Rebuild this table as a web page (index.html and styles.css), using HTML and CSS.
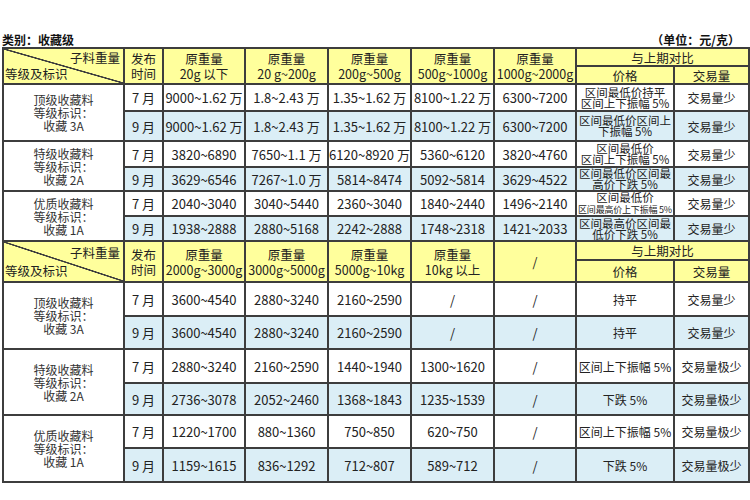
FILE: index.html
```html
<!DOCTYPE html>
<html lang="zh-CN">
<head>
<meta charset="utf-8">
<title>收藏级</title>
<link rel="stylesheet" href="styles.css">
</head>
<body>
<div class="page">
  <div class="caption">
    <span class="cat">类别：收藏级</span>
    <span class="unit">（单位：元/克）</span>
  </div>
  <table class="grid">
    <colgroup>
      <col class="c1"><col class="c2"><col class="c3"><col class="c4"><col class="c5"><col class="c6"><col class="c7"><col class="c8"><col class="c9">
    </colgroup>
    <tbody>
      <tr class="h18">
        <td class="hd diag" rowspan="2"><div class="tr">子料重量</div><div class="bl">等级及标识</div></td>
        <td class="hd" rowspan="2">发布<br>时间</td>
        <td class="hd" rowspan="2">原重量<br>20g 以下</td>
        <td class="hd" rowspan="2">原重量<br>20 g~200g</td>
        <td class="hd" rowspan="2">原重量<br>200g~500g</td>
        <td class="hd" rowspan="2">原重量<br>500g~1000g</td>
        <td class="hd" rowspan="2">原重量<br>1000g~2000g</td>
        <td class="hd" colspan="2">与上期对比</td>
      </tr>
      <tr class="h18">
        <td class="hd">价格</td>
        <td class="hd">交易量</td>
      </tr>

      <tr class="h27">
        <td class="lbl" rowspan="2">顶级收藏料<br>等级标识：<br>收藏 3A</td>
        <td>7 月</td><td>9000~1.62 万</td><td>1.8~2.43 万</td><td>1.35~1.62 万</td><td>8100~1.22 万</td><td>6300~7200</td>
        <td class="two">区间最低价持平<br>区间上下振幅 5%</td><td class="sm">交易量少</td>
      </tr>
      <tr class="h30 blue">
        <td>9 月</td><td>9000~1.62 万</td><td>1.8~2.43 万</td><td>1.35~1.62 万</td><td>8100~1.22 万</td><td>6300~7200</td>
        <td class="two">区间最低价区间上<br>下振幅 5%</td><td class="sm">交易量少</td>
      </tr>

      <tr class="h26">
        <td class="lbl" rowspan="2">特级收藏料<br>等级标识：<br>收藏 2A</td>
        <td>7 月</td><td>3820~6890</td><td>7650~1.1 万</td><td>6120~8920 万</td><td>5360~6120</td><td>3820~4760</td>
        <td class="two">区间最低价<br>区间上下振幅 5%</td><td class="sm">交易量少</td>
      </tr>
      <tr class="h24 blue">
        <td>9 月</td><td>3629~6546</td><td>7267~1.0 万</td><td>5814~8474</td><td>5092~5814</td><td>3629~4522</td>
        <td class="two">区间最低价区间最<br>高价下跌 5%</td><td class="sm">交易量少</td>
      </tr>

      <tr class="h25">
        <td class="lbl" rowspan="2">优质收藏料<br>等级标识：<br>收藏 1A</td>
        <td>7 月</td><td>2040~3040</td><td>3040~5440</td><td>2360~3040</td><td>1840~2440</td><td>1496~2140</td>
        <td class="two">区间最低价<br><span class="tiny">区间最高价上下振幅 5%</span></td><td class="sm">交易量少</td>
      </tr>
      <tr class="h25 blue">
        <td>9 月</td><td>1938~2888</td><td>2880~5168</td><td>2242~2888</td><td>1748~2318</td><td>1421~2033</td>
        <td class="two">区间最高价区间最<br>低价下跌 5%</td><td class="sm">交易量少</td>
      </tr>

      <tr class="h19">
        <td class="hd diag diag2" rowspan="2"><div class="tr">子料重量</div><div class="bl">等级及标识</div></td>
        <td class="hd" rowspan="2">发布<br>时间</td>
        <td class="hd" rowspan="2">原重量<br>2000g~3000g</td>
        <td class="hd" rowspan="2">原重量<br>3000g~5000g</td>
        <td class="hd" rowspan="2">原重量<br>5000g~10kg</td>
        <td class="hd" rowspan="2">原重量<br>10kg 以上</td>
        <td class="hd" rowspan="2">/</td>
        <td class="hd" colspan="2">与上期对比</td>
      </tr>
      <tr class="h22">
        <td class="hd">价格</td>
        <td class="hd">交易量</td>
      </tr>

      <tr class="h34">
        <td class="lbl" rowspan="2">顶级收藏料<br>等级标识：<br>收藏 3A</td>
        <td>7 月</td><td>3600~4540</td><td>2880~3240</td><td>2160~2590</td><td>/</td><td>/</td>
        <td class="sm">持平</td><td class="sm">交易量少</td>
      </tr>
      <tr class="h33 blue">
        <td>9 月</td><td>3600~4540</td><td>2880~3240</td><td>2160~2590</td><td>/</td><td>/</td>
        <td class="sm">持平</td><td class="sm">交易量少</td>
      </tr>

      <tr class="h34">
        <td class="lbl" rowspan="2">特级收藏料<br>等级标识：<br>收藏 2A</td>
        <td>7 月</td><td>2880~3240</td><td>2160~2590</td><td>1440~1940</td><td>1300~1620</td><td>/</td>
        <td class="sm">区间上下振幅 5%</td><td class="sm">交易量极少</td>
      </tr>
      <tr class="h32 blue">
        <td>9 月</td><td>2736~3078</td><td>2052~2460</td><td>1368~1843</td><td>1235~1539</td><td>/</td>
        <td class="sm">下跌 5%</td><td class="sm">交易量极少</td>
      </tr>

      <tr class="h33">
        <td class="lbl" rowspan="2">优质收藏料<br>等级标识：<br>收藏 1A</td>
        <td>7 月</td><td>1220~1700</td><td>880~1360</td><td>750~850</td><td>620~750</td><td>/</td>
        <td class="sm">区间上下振幅 5%</td><td class="sm">交易量极少</td>
      </tr>
      <tr class="h34 blue">
        <td>9 月</td><td>1159~1615</td><td>836~1292</td><td>712~807</td><td>589~712</td><td>/</td>
        <td class="sm">下跌 5%</td><td class="sm">交易量极少</td>
      </tr>
    </tbody>
  </table>
</div>
</body>
</html>
```

FILE: styles.css
```css
html, body {
  margin: 0;
  padding: 0;
  background: #ffffff;
}

body {
  font-family: "Noto Sans CJK SC", "Noto Sans", sans-serif;
  color: #222;
  font-size: 13px;
}

.page {
  width: 750px;
  padding-left: 2px;
  box-sizing: border-box;
}

.caption {
  height: 47px;
  display: flex;
  justify-content: space-between;
  align-items: flex-end;
  padding-right: 10px;
  padding-bottom: 0;
  box-sizing: border-box;
  font-size: 12px;
  font-weight: bold;
  line-height: 14px;
  color: #111;
}

.grid {
  width: 746px;
  table-layout: fixed;
  border-collapse: collapse;
  border: 2px solid #3d3d3d;
}

.c1 { width: 121px; }
.c2 { width: 39px; }
.c3 { width: 82px; }
.c4 { width: 83px; }
.c5 { width: 83px; }
.c6 { width: 83px; }
.c7 { width: 82px; }
.c8 { width: 98px; }
.c9 { width: 75px; }

.grid td {
  border: 2px solid #3d3d3d;
  padding: 0;
  text-align: center;
  vertical-align: middle;
  line-height: 15px;
  white-space: nowrap;
  overflow: visible;
  background: #ffffff;
}

.grid .blue td {
  background: #dbeef6;
}

.grid td.hd {
  background: #ffff9c;
  font-size: 12.5px;
  line-height: 15px;
}

.grid td.lbl {
  background: #ffffff;
  font-size: 12px;
  line-height: 13px;
  color: #333;
}

.grid td.two {
  font-size: 11.5px;
  line-height: 11px;
}

.grid td.sm {
  font-size: 12px;
}

.tiny {
  font-size: 9px;
  letter-spacing: -0.2px;
}

.grid td.diag {
  background: #ffff9c linear-gradient(to top right, transparent calc(50% - 1px), #3d3d3d calc(50% - 0.5px), #3d3d3d calc(50% + 0.5px), transparent calc(50% + 1px));
  vertical-align: middle;
  font-size: 12.5px;
}

.diag .tr {
  text-align: right;
  padding-right: 3px;
  line-height: 16px;
}

.diag .bl {
  text-align: left;
  padding-left: 1px;
  line-height: 16px;
}

.diag2 .tr { line-height: 18px; }
.diag2 .bl { line-height: 18px; }

.h18 { height: 18px; }
.h19 { height: 19px; }
.h22 { height: 22px; }
.h24 { height: 24px; }
.h25 { height: 25px; }
.h26 { height: 26px; }
.h27 { height: 27px; }
.h29 { height: 29px; }
.h30 { height: 30px; }
.h32 { height: 32px; }
.h33 { height: 33px; }
.h34 { height: 34px; }
.h35 { height: 35px; }
```
